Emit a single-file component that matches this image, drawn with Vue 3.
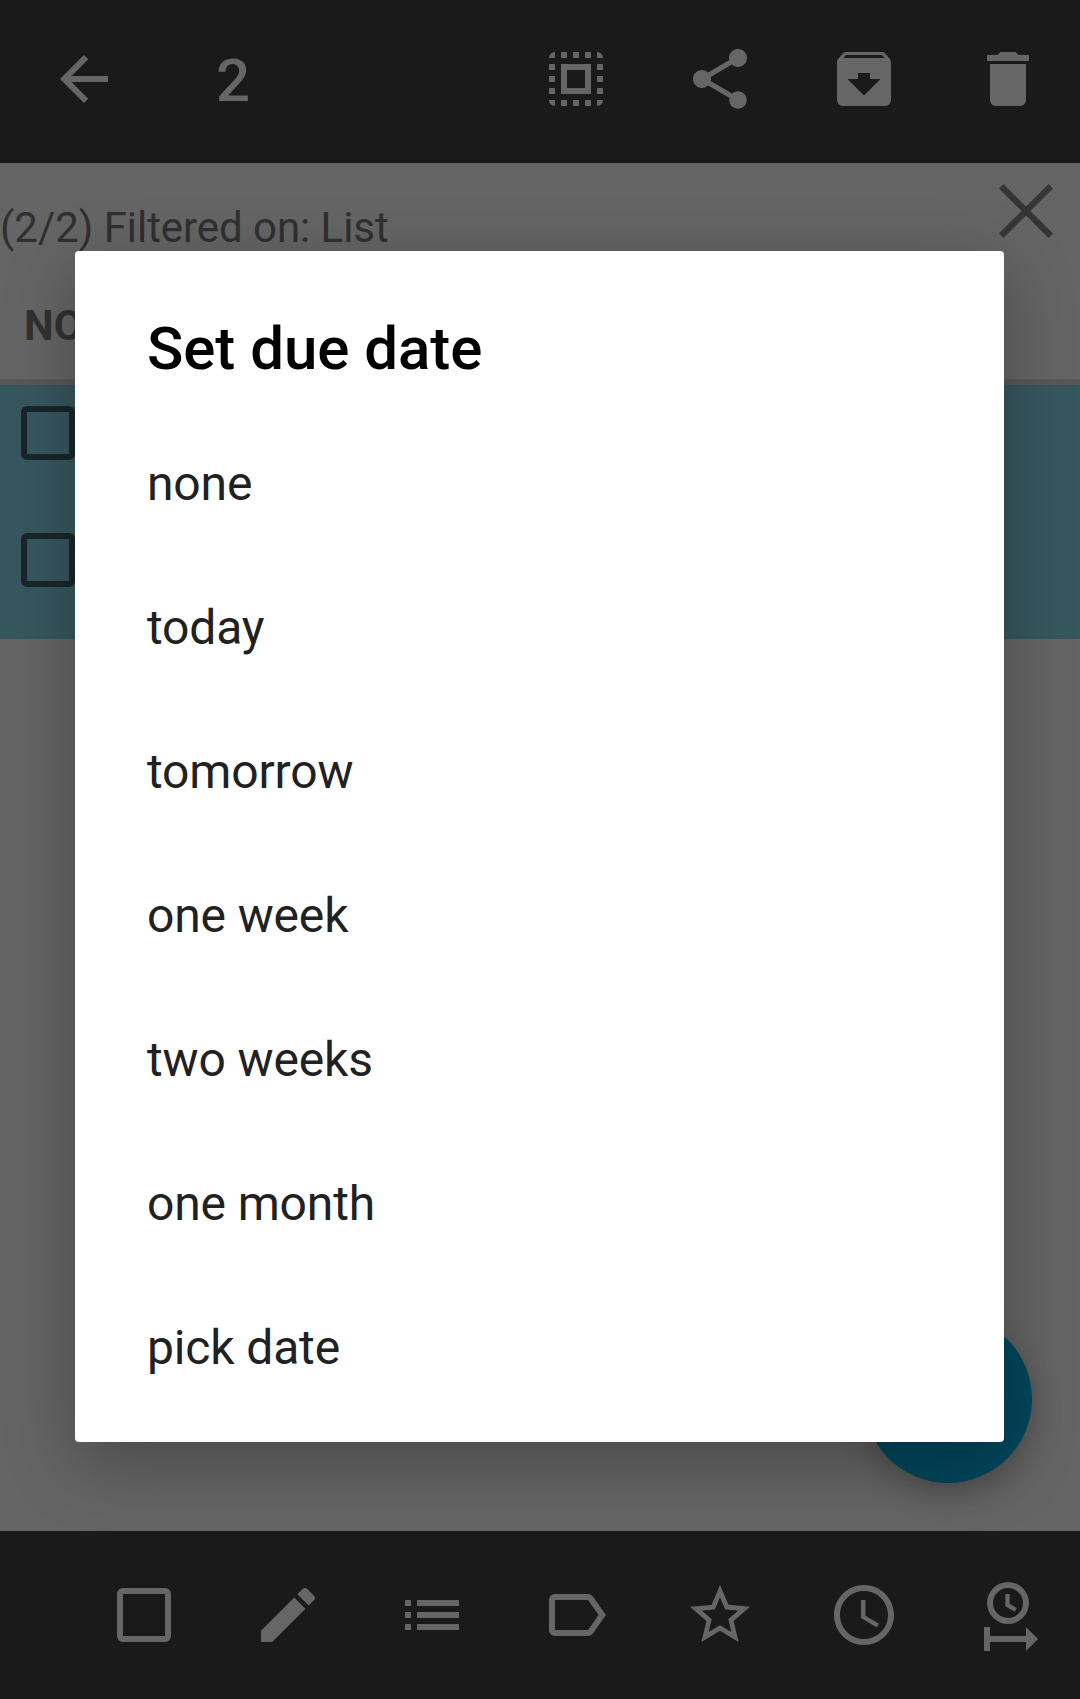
<script setup>
const topIcons = [
  { name: 'select all', d: 'M3 5h2V3c-1.1 0-2 .9-2 2zm0 8h2v-2H3v2zm4 8h2v-2H7v2zM3 9h2V7H3v2zm10-6h-2v2h2V3zm6 0v2h2c0-1.1-.9-2-2-2zM5 21v-2H3c0 1.1.9 2 2 2zm-2-4h2v-2H3v2zM9 3H7v2h2V3zm2 18h2v-2h-2v2zm8-8h2v-2h-2v2zm0 8c1.1 0 2-.9 2-2h-2v2zm0-12h2V7h-2v2zm0 8h2v-2h-2v2zm-4 4h2v-2h-2v2zm0-16h2V3h-2v2zM7 17h10V7H7v10zm2-8h6v6H9V9z' },
  { name: 'share', d: 'M18 16.08c-.76 0-1.44.3-1.96.77L8.91 12.7c.05-.23.09-.46.09-.7s-.04-.47-.09-.7l7.05-4.11c.54.5 1.25.81 2.04.81 1.66 0 3-1.34 3-3s-1.34-3-3-3-3 1.34-3 3c0 .24.04.47.09.7L8.04 9.81C7.5 9.31 6.79 9 6 9c-1.66 0-3 1.34-3 3s1.34 3 3 3c.79 0 1.5-.31 2.04-.81l7.12 4.16c-.05.21-.08.43-.08.65 0 1.61 1.31 2.92 2.92 2.92s2.92-1.31 2.92-2.92-1.31-2.92-2.92-2.92z' },
  { name: 'archive', d: 'M20.54 5.23l-1.39-1.68C18.88 3.21 18.47 3 18 3H6c-.47 0-.88.21-1.16.55L3.46 5.23C3.17 5.57 3 6.02 3 6.5V19c0 1.1.9 2 2 2h14c1.1 0 2-.9 2-2V6.5c0-.48-.17-.93-.46-1.27zM12 17.5L6.5 12H10v-2h4v2h3.5L12 17.5zM5.12 5l.81-1h12l.94 1H5.12z' },
  { name: 'delete', d: 'M6 19c0 1.1.9 2 2 2h8c1.1 0 2-.9 2-2V7H6v12zM19 4h-3.5l-1-1h-5l-1 1H5v2h14V4z' },
]
const bottomIcons = [
  { name: 'checkbox', d: 'M19 5v14H5V5h14m0-2H5c-1.1 0-2 .9-2 2v14c0 1.1.9 2 2 2h14c1.1 0 2-.9 2-2V5c0-1.1-.9-2-2-2z' },
  { name: 'edit', d: 'M3 17.25V21h3.75L17.81 9.94l-3.75-3.75L3 17.25zM20.71 7.04c.39-.39.39-1.02 0-1.41l-2.34-2.34c-.39-.39-1.02-.39-1.41 0l-1.83 1.83 3.75 3.75 1.83-1.83z' },
  { name: 'list', d: 'M3 13h2v-2H3v2zm0 4h2v-2H3v2zm0-8h2V7H3v2zm4 4h14v-2H7v2zm0 4h14v-2H7v2zM7 7v2h14V7H7z' },
  { name: 'label', d: 'M17.63 5.84C17.27 5.33 16.67 5 16 5L5 5.01C3.9 5.01 3 5.9 3 7v10c0 1.1.9 1.99 2 1.99L16 19c.67 0 1.27-.33 1.63-.84L22 12l-4.37-6.16zM16 17H5V7h11l3.55 5L16 17z' },
  { name: 'star', d: 'M22 9.24l-7.19-.62L12 2 9.19 8.63 2 9.24l5.46 4.73L5.82 21 12 17.27 18.18 21l-1.63-7.03L22 9.24zM12 15.4l-3.76 2.27 1-4.28-3.32-2.88 4.38-.38L12 6.1l1.71 4.04 4.38.38-3.32 2.88 1 4.28L12 15.4z' },
  { name: 'due', d: 'M11.99 2C6.47 2 2 6.48 2 12s4.47 10 9.99 10C17.52 22 22 17.52 22 12S17.52 2 11.99 2zM12 20c-4.42 0-8-3.58-8-8s3.58-8 8-8 8 3.58 8 8-3.58 8-8 8zm.5-13H11v6l5.25 3.15.75-1.23-4.5-2.67z' },
  { name: 'threshold', d: 'M12 1a7 7 0 1 0 0 14 7 7 0 0 0 0-14zm0 2a5 5 0 1 1 0 10 5 5 0 0 1 0-10zM11.1 5v4.05l3.1 1.85.75-1.2-2.4-1.45V5zM4 16v8h2v-3h12v3l4-4-4-4v3H6v-3z' },
]
const options = ['none', 'today', 'tomorrow', 'one week', 'two weeks', 'one month', 'pick date']
</script>

<template>
  <div class="screen">
    <header class="topbar">
      <svg class="icon" viewBox="0 0 24 24"><path d="M20 11H7.83l5.59-5.59L12 4l-8 8 8 8 1.41-1.41L7.83 13H20v-2z" /></svg>
      <span class="count">2</span>
      <nav class="actions">
        <div v-for="i in topIcons" :key="i.name" class="slot">
          <svg class="icon" viewBox="0 0 24 24"><path :d="i.d" /></svg>
        </div>
      </nav>
    </header>

    <main class="content">
      <div class="filter">
        <span class="filter-text">(2/2) Filtered on: List</span>
        <svg class="close" viewBox="0 0 54 54"><path d="M2.2 2.2 51.8 51.8M51.8 2.2 2.2 51.8" /></svg>
      </div>
      <div class="group">NO</div>
      <ul class="tasks">
        <li v-for="n in 2" :key="n" class="task"><span class="box"></span></li>
      </ul>
      <div class="fab"></div>
    </main>

    <footer class="bottombar">
      <div v-for="i in bottomIcons" :key="i.name" class="slot">
        <svg class="icon" viewBox="0 0 24 24"><path :d="i.d" /></svg>
      </div>
    </footer>

    <section class="dialog">
      <h1 class="title">Set due date</h1>
      <ul class="options">
        <li v-for="o in options" :key="o" class="option">{{ o }}</li>
      </ul>
    </section>
  </div>
</template>

<style>
body { margin: 0; }
</style>

<style scoped>
.screen {
  position: relative;
  display: flex;
  flex-direction: column;
  width: 1080px;
  height: 1699px;
  overflow: hidden;
  background: #656565;
  font-family: Roboto, "Liberation Sans", sans-serif;
}
ul { list-style: none; margin: 0; padding: 0; }
.topbar {
  display: flex;
  align-items: center;
  height: 163px;
  box-sizing: border-box;
  padding: 0 0 5px 48px;
  background: #1a1a1a;
}
.icon {
  display: block;
  width: 72px;
  height: 72px;
  fill: #666;
  overflow: visible;
}
.count {
  margin-left: 96px;
  padding-top: 4px;
  font-size: 60px;
  line-height: 70px;
  font-weight: 500;
  color: #666;
}
.actions { display: flex; margin-left: auto; }
.slot {
  display: flex;
  justify-content: center;
  width: 144px;
}
.content { position: relative; flex: 1; }
.filter {
  display: flex;
  justify-content: space-between;
  align-items: flex-start;
  height: 128px;
  box-sizing: border-box;
  padding: 21px 27px 0 0;
}
.filter-text {
  margin-top: 19px;
  font-size: 42px;
  line-height: 50px;
  letter-spacing: -0.05px;
  color: #303030;
}
.close {
  width: 54px;
  height: 54px;
  fill: none;
  stroke: #363636;
  stroke-width: 6.2;
}
.group {
  height: 88px;
  box-sizing: content-box;
  padding-left: 24px;
  border-bottom: 6px solid #595858;
  font-size: 42px;
  line-height: 70px;
  font-weight: 700;
  color: #313131;
}
.tasks { background: #37575f; }
.task { height: 127px; display: flex; }
.box {
  width: 42px;
  height: 42px;
  margin: 21px 0 0 21px;
  border: 6px solid #18262a;
  border-radius: 6px;
}
.fab {
  position: absolute;
  right: 48px;
  bottom: 48px;
  width: 168px;
  height: 168px;
  border-radius: 50%;
  background: #00465b;
  box-shadow: 0 10px 30px rgba(0, 0, 0, 0.24);
}
.bottombar {
  display: flex;
  align-items: center;
  height: 168px;
  padding-left: 72px;
  background: #1a1a1a;
}
.dialog {
  position: absolute;
  left: 75px;
  top: 251px;
  width: 929px;
  height: 1191px;
  box-sizing: border-box;
  padding: 54px 72px 0;
  border-radius: 4px;
  background: #fff;
  box-shadow: 0 20px 70px rgba(0, 0, 0, 0.28);
}
.title {
  margin: 0;
  padding-top: 9px;
  height: 98px;
  box-sizing: border-box;
  font-size: 60px;
  line-height: 70px;
  font-weight: 500;
  letter-spacing: -0.05px;
  color: #000;
}
.options { padding-top: 9px; }
.option {
  height: 144px;
  font-size: 48px;
  line-height: 144px;
  letter-spacing: -0.15px;
  color: #212121;
}
</style>
